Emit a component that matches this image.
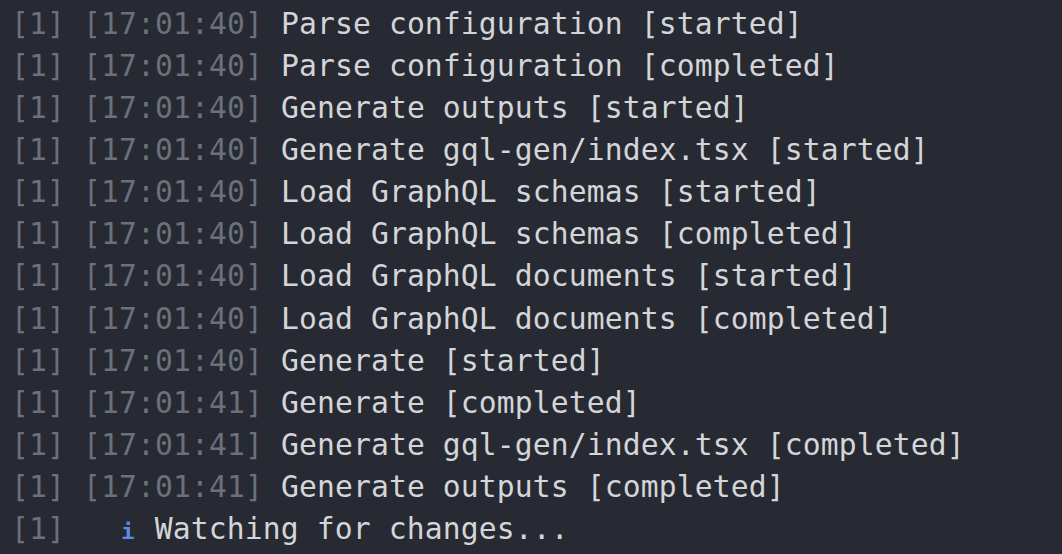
import React from "react";

const lines: [string, string][] = [
  ["17:01:40", "Parse configuration [started]"],
  ["17:01:40", "Parse configuration [completed]"],
  ["17:01:40", "Generate outputs [started]"],
  ["17:01:40", "Generate gql-gen/index.tsx [started]"],
  ["17:01:40", "Load GraphQL schemas [started]"],
  ["17:01:40", "Load GraphQL schemas [completed]"],
  ["17:01:40", "Load GraphQL documents [started]"],
  ["17:01:40", "Load GraphQL documents [completed]"],
  ["17:01:40", "Generate [started]"],
  ["17:01:41", "Generate [completed]"],
  ["17:01:41", "Generate gql-gen/index.tsx [completed]"],
  ["17:01:41", "Generate outputs [completed]"],
];

export default function App() {
  return (
    <div
      className="w-[1062px] h-[554px] overflow-hidden bg-[#272a32] pl-[11px] pt-[3px] text-[29.7px] tracking-[0.12px] leading-[42.08px] whitespace-pre text-[#d3d5d9]"
      style={{ fontFamily: '"DejaVu Sans Mono", monospace' }}
    >
      {lines.map(([t, msg], i) => (
        <div key={i}>
          <span className="text-[#6c707a]">[1] [{t}]</span> {msg}
        </div>
      ))}
      <div>
        <span className="text-[#6c707a]">[1]</span>   <span className="inline-block w-[17.9px] text-center text-[#5b8de6] font-bold text-[22px]">i</span> Watching for changes...
      </div>
    </div>
  );
}
